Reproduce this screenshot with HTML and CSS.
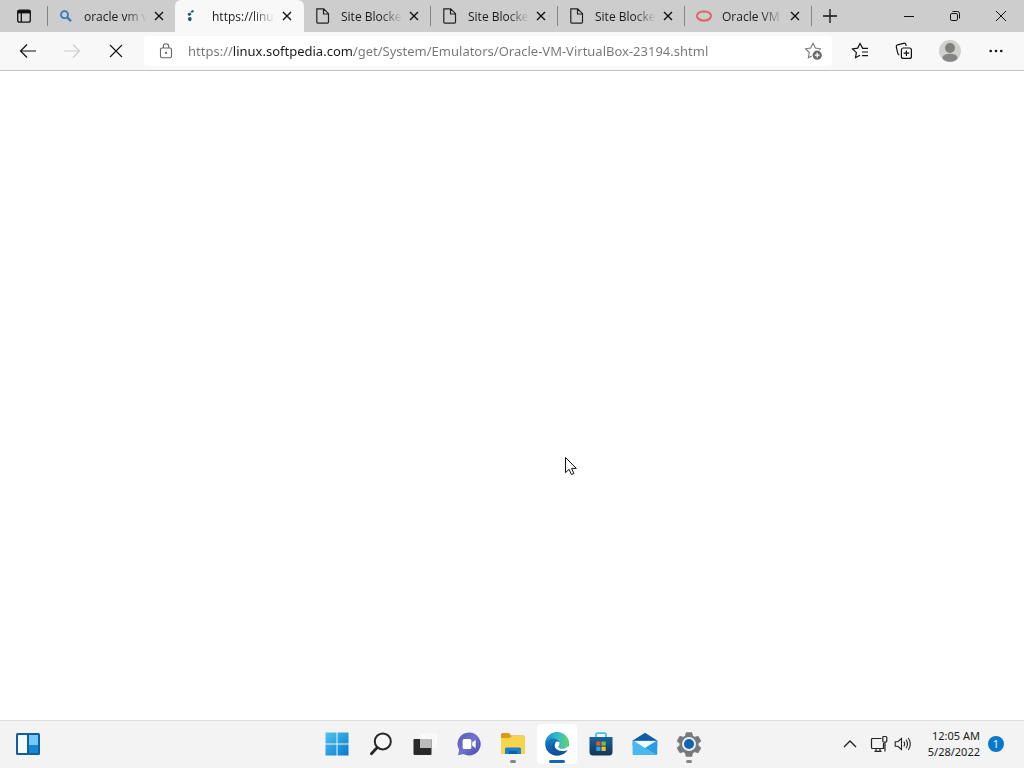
FILE: index.html
```html
<!DOCTYPE html>
<html lang="en">
<head>
<meta charset="utf-8">
<meta name="viewport" content="width=device-width, initial-scale=1">
<title>https://linux.softpedia.com</title>
<link rel="stylesheet" href="styles.css">
</head>
<body>
<div class="desktop">
  <header class="tabstrip">
    <button class="tab-actions" aria-label="Tab actions menu">
      <svg width="16" height="16" viewBox="0 0 16 16" fill="none" stroke="#111" stroke-width="1.3"><rect x="1.7" y="2.2" width="12.6" height="12" rx="2"/><path d="M1.5 3.8h13" stroke-width="3.2"/><path d="M5.3 5v9"/></svg>
    </button>
    <div class="tabs">
      <div class="tab">
        <svg class="favicon" viewBox="0 0 16 16" fill="none" stroke="#3579b8"><circle cx="6.500" cy="6.700" r="3.500" stroke-width="1.800"/><path d="M9.200 9.400l3.800 3.800" stroke-width="2.300"/></svg>
        <button class="tab-title">oracle vm v</button>
        <button class="tab-close" aria-label="Close tab"><svg class="cross" viewBox="0 0 10 10"><path d="M1 1l8 8M9 1L1 9"/></svg></button>
      </div>
      <div class="tab active">
        <svg class="favicon" viewBox="0 0 16 16" fill="#24536b"><path d="M4.600 3.300l2.400-1.300 1 1.600-2.200 1.400zM1.800 5.500l2.500-1 1.100 2-2.100 1.600-1.500-1zM2.300 9.600l2.500-.7.9 2-1 2.300-2-.4-.8-1.800z"/></svg>
        <button class="tab-title">https://linux</button>
        <button class="tab-close" aria-label="Close tab"><svg class="cross" viewBox="0 0 10 10"><path d="M1 1l8 8M9 1L1 9"/></svg></button>
      </div>
      <div class="tab">
        <svg class="favicon page" viewBox="0 0 16 16"><path d="M1.800.8h6.900l4.800 4.900v8.400q0 1-1 1H2.800q-1 0-1-1zM8.500 1v5h5"/></svg>
        <button class="tab-title">Site Blocke</button>
        <button class="tab-close" aria-label="Close tab"><svg class="cross" viewBox="0 0 10 10"><path d="M1 1l8 8M9 1L1 9"/></svg></button>
      </div>
      <div class="tab">
        <svg class="favicon page" viewBox="0 0 16 16"><path d="M1.800.8h6.900l4.800 4.900v8.400q0 1-1 1H2.800q-1 0-1-1zM8.500 1v5h5"/></svg>
        <button class="tab-title">Site Blocke</button>
        <button class="tab-close" aria-label="Close tab"><svg class="cross" viewBox="0 0 10 10"><path d="M1 1l8 8M9 1L1 9"/></svg></button>
      </div>
      <div class="tab">
        <svg class="favicon page" viewBox="0 0 16 16"><path d="M1.800.8h6.900l4.800 4.900v8.400q0 1-1 1H2.800q-1 0-1-1zM8.500 1v5h5"/></svg>
        <button class="tab-title">Site Blocke</button>
        <button class="tab-close" aria-label="Close tab"><svg class="cross" viewBox="0 0 10 10"><path d="M1 1l8 8M9 1L1 9"/></svg></button>
      </div>
      <div class="tab">
        <svg class="favicon" viewBox="0 0 16 16" fill="none" stroke="#dd6560" stroke-width="2"><rect x="1" y="3.400" width="14" height="9" rx="6" ry="4.500"/></svg>
        <button class="tab-title">Oracle VM</button>
        <button class="tab-close" aria-label="Close tab"><svg class="cross" viewBox="0 0 10 10"><path d="M1 1l8 8M9 1L1 9"/></svg></button>
      </div>
    </div>
    <button class="new-tab" aria-label="New tab"><svg width="14" height="14" viewBox="0 0 14 14" stroke="#111" stroke-width="1.3"><path d="M7 0v14M0 7h14"/></svg></button>
    <div class="window-controls">
      <button aria-label="Minimize"><svg width="12" height="12" viewBox="0 0 12 12" stroke="#111"><path d="M1 6.500h10"/></svg></button>
      <button aria-label="Restore"><svg width="12" height="12" viewBox="0 0 12 12" fill="none" stroke="#111"><rect x="1.500" y="3.500" width="7" height="7" rx="1.400"/><path d="M3.500 1.500H8.500q2 0 2 2V8.500"/></svg></button>
      <button aria-label="Close"><svg width="12" height="12" viewBox="0 0 12 12" stroke="#111"><path d="M1 1l10 10M11 1L1 11"/></svg></button>
    </div>
  </header>

  <nav class="toolbar">
    <div class="nav-buttons">
      <button aria-label="Back"><svg width="18" height="16" viewBox="0 0 18 16" fill="none" stroke="#111" stroke-width="1.200"><path d="M17 8H1.600M8 1.500L1.500 8 8 14.500"/></svg></button>
      <button aria-label="Forward" disabled><svg width="18" height="16" viewBox="0 0 18 16" fill="none" stroke="#ccc" stroke-width="1.200"><path d="M1 8h15.400M10 1.500L16.500 8 10 14.500"/></svg></button>
      <button aria-label="Stop"><svg width="14" height="14" viewBox="0 0 14 14" stroke="#111" stroke-width="1.100"><path d="M1 1l12 12M13 1L1 13"/></svg></button>
    </div>
    <div class="address">
      <button class="site-info" aria-label="View site information"><svg width="14" height="16" viewBox="0 0 14 16" fill="none" stroke="#666" stroke-width="1.100"><rect x="1.500" y="5" width="11" height="9.800" rx="1.500"/><path d="M4.300 5V3.400a2.700 2.700 0 0 1 5.400 0V5"/><circle cx="7" cy="9.800" r=".6" fill="#555"/></svg></button>
      <input class="url" type="text" aria-label="Address" spellcheck="false" value="https://linux.softpedia.com/get/System/Emulators/Oracle-VM-VirtualBox-23194.shtml">
      <button class="add-favorite" aria-label="Add this page to favorites"><svg width="18" height="18" viewBox="0 0 18 18" fill="none" stroke="#777" stroke-width="1.100"><path d="M15.500 8l.9-1.200-5-.7L9 1.300 6.700 6.100l-5.100.7 3.700 3.700-.9 5.200 3.400-1.800"/><circle cx="13.200" cy="13.200" r="4.600" fill="#6c6c6c" stroke="none"/><path d="M13.200 10.800v4.800M10.800 13.200h4.800" stroke="#fff" stroke-width="1.300"/></svg></button>
    </div>
    <div class="tools">
      <button aria-label="Favorites"><svg width="18" height="18" viewBox="0 0 18 18" fill="none" stroke="#111" stroke-width="1.200"><path d="M17 6.300h-5.300L9 1.500 6.700 6.100l-5.200.8 3.900 3.700-.9 5.100L9 13.200M11 10h6M11 13.600h6"/></svg></button>
      <button aria-label="Collections"><svg width="18" height="18" viewBox="0 0 18 18" fill="none" stroke="#111" stroke-width="1.200"><rect x="6.400" y="6" width="10" height="10.400" rx="2"/><path d="M11.400 8.400v5.600M8.600 11.200h5.600M4.300 12.800q-1.200-.3-1.500-1.500L1.300 5Q1 3.300 2.600 2.800l6-1.500q1.900-.4 2.400 1.500l.2 1"/></svg></button>
      <button class="profile" aria-label="Profile"><svg width="22" height="22" viewBox="0 0 22 22"><circle cx="11" cy="11" r="11" fill="#d0d0ce"/><circle cx="11" cy="8" r="5" fill="#7f7f7f"/><ellipse cx="11" cy="17.700" rx="7.500" ry="4" fill="#858585"/></svg></button>
      <button aria-label="Settings and more"><svg width="14" height="4" viewBox="0 0 14 4" fill="#111"><circle cx="1.700" cy="2" r="1.300"/><circle cx="7" cy="2" r="1.300"/><circle cx="12.300" cy="2" r="1.300"/></svg></button>
    </div>
  </nav>

  <main class="page-view"></main>

  <footer class="taskbar">
    <button class="widgets" aria-label="Widgets"><svg width="24" height="22" viewBox="0 0 24 22"><rect width="24" height="22" rx="1.500" fill="#125e9c"/><rect x="2" y="2" width="9" height="18" rx=".5" fill="#f4f9fd"/><rect x="13" y="2" width="9" height="10" fill="#72c9f8"/><rect x="13" y="12" width="9" height="8" fill="#1686d3"/></svg></button>
    <div class="apps">
      <button aria-label="Start"><svg width="24" height="24" viewBox="0 0 24 24"><defs><linearGradient id="win" gradientUnits="userSpaceOnUse" x1="0" y1="0" x2="24" y2="24"><stop stop-color="#4fc6f0"/><stop offset="1" stop-color="#0877cc"/></linearGradient></defs><path fill="url(#win)" d="M.5.5h11v11H.5zM12.500.5h11v11h-11zM.5 12.500h11v11H.5zM12.500 12.500h11v11h-11z"/></svg></button>
      <button aria-label="Search"><svg width="24" height="24" viewBox="0 0 24 24" fill="none" stroke="#272727" stroke-linecap="round"><circle cx="13.800" cy="9.400" r="8" stroke-width="2" fill="#f6f6f6"/><path d="M8 15.800l-5.600 6" stroke-width="2.800"/></svg></button>
      <button aria-label="Task view"><svg width="24" height="24" viewBox="0 0 24 24"><rect x="7" y="1" width="17" height="15" rx="1" fill="#f9f9f9"/><rect x=".5" y="7" width="18" height="16" rx="1" fill="#292929"/><path d="M7 7h11.500v9H7z" fill="#bcbcbc"/></svg></button>
      <button aria-label="Chat"><svg width="24" height="24" viewBox="0 0 24 24"><defs><linearGradient id="chat" x2="1" y2="1"><stop stop-color="#5559b8"/><stop offset=".5" stop-color="#7472ce"/><stop offset="1" stop-color="#4646a8"/></linearGradient></defs><path fill="url(#chat)" d="M12 .5A11.500 11.500 0 1 1 6.500 22L1 23.300l1.200-5.400A11.500 11.500 0 0 1 12 .5z"/><rect x="5.700" y="7" width="8.600" height="10" rx="1.500" fill="#fff"/><path d="M15.200 10.500l3.400-2.700v8.400l-3.400-2.700z" fill="#fff"/></svg></button>
      <button class="running" aria-label="File Explorer"><svg width="24" height="24" viewBox="0 0 24 24"><path d="M0 2.500Q0 1 1.500 1H8l2 2.500h12q2 0 2 2V12H0z" fill="#d89b20"/><path d="M0 6h8.500L11 4h12q1 0 1 1v17H0z" fill="#f8d44c"/><path d="M4 22v-5q0-1.500 1.500-1.500h13q1.500 0 1.500 1.500v5z" fill="#1980ca"/><path d="M8 19h8v3H8z" fill="#0c5fa5"/></svg></button>
      <button class="running current" aria-label="Microsoft Edge"><svg width="24" height="24" viewBox="0 0 24 24"><defs><linearGradient id="edgetop" x1="0" x2="1"><stop stop-color="#168fd5"/><stop offset=".55" stop-color="#35bdc9"/><stop offset="1" stop-color="#61d864"/></linearGradient><linearGradient id="edgelow" x2="0" y2="1"><stop stop-color="#1a91d8"/><stop offset="1" stop-color="#0b4d98"/></linearGradient></defs><circle cx="12" cy="12" r="11.800" fill="url(#edgelow)"/><path fill="url(#edgetop)" d="M.3 10.500C1.500 4 6.500.2 12 .2c7 0 11.800 5 11.800 10.300 0 4.300-3 6.300-6.300 6.300-3 0-4.200-1-4.200-2.200 0-.8 1.300-1.200 1.300-3.200 0-2.500-2.800-4.800-6.300-4.800C4.500 6.600 1.500 8.400.3 10.500z"/><path fill="#11549f" d="M9.300 10.200c-4 2.500-2 11 5 12.600 3.500-.2 6.500-2.100 8.300-4.900-5.500 2.300-10.500 1-12.500-2.300-.9-1.800-1-3.800-.8-5.400z"/><path fill="#fff" d="M14.600 11.400c0 2-1.300 2.400-1.300 3.200 0 1.200 1.200 2.200 4.200 2.200 2.300 0 4.600-1 5.700-3l.8 1.800-1.400 2.300c-5.500 2.300-10.500 1-12.500-2.300-1-2.500 0-4.800 1.600-6 1.300-.4 2.900.3 2.900 1.800z"/></svg></button>
      <button aria-label="Microsoft Store"><svg width="24" height="24" viewBox="0 0 24 24"><defs><linearGradient id="store" x2="0" y2="1"><stop stop-color="#17649f"/><stop offset="1" stop-color="#173555"/></linearGradient></defs><path d="M7 6V2.500Q7 1.200 8.300 1.200h7.400Q17 1.200 17 2.500V6" fill="none" stroke="#45c4e6" stroke-width="1.800"/><path fill="url(#store)" d="M.5 5h23v15q0 3.500-3.500 3.500H4Q.5 23.500.5 20z"/><path fill="#f05228" d="M7.300 9.500h4.200v4.200H7.300z"/><path fill="#80bb35" d="M12.500 9.500h4.200v4.200h-4.200z"/><path fill="#28a9ea" d="M7.300 14.700h4.200v4.200H7.300z"/><path fill="#fbc32a" d="M12.500 14.700h4.200v4.200h-4.200z"/></svg></button>
      <button aria-label="Mail"><svg width="26" height="24" viewBox="0 0 26 24"><path fill="#105ca5" d="M.8 8.500L13 .8l12.200 7.700V14H.8z"/><path fill="#2c9be0" d="M.8 8.500h24.400V22q0 1-1 1H1.800q-1 0-1-1z"/><path fill="#48b9ef" d="M.8 8.500L25 22.700q-.3.3-.8.3H1.800q-1 0-1-1z"/><path fill="#f5fafd" d="M2 9h22l-11 7z"/></svg></button>
      <button class="running" aria-label="Settings"><svg width="26" height="26" viewBox="0 0 26 26"><path fill="#78797c" stroke="#78797c" stroke-width="1.500" stroke-linejoin="round" d="M10.500 2h5l.8 3.300 2.200 1.300 3.300-1 2.500 4.300-2.500 2.400v2.400l2.500 2.400-2.500 4.300-3.300-1-2.200 1.300-.8 3.300h-5l-.8-3.300-2.200-1.300-3.300 1-2.500-4.300 2.500-2.400v-2.400L1.700 9.900l2.500-4.300 3.300 1 2.200-1.300z"/><circle cx="13" cy="13" r="7" fill="#e8eef4"/><circle cx="13" cy="13" r="5" fill="#1264ad"/></svg></button>
    </div>
    <div class="tray">
      <button aria-label="Show hidden icons"><svg width="14" height="8" viewBox="0 0 14 8" fill="none" stroke="#222" stroke-width="1.400"><path d="M1 7l6-6 6 6"/></svg></button>
      <button class="quick" aria-label="Network and volume">
        <svg width="18" height="18" viewBox="0 0 18 18" fill="none" stroke="#222" stroke-width="1.200"><path d="M11.500 3.500h-9q-1 0-1 1v8q0 1 1 1h11V8M4.500 16.300h7M6 13.500v2.800M10 13.500v2.800M15 7v9.500"/><rect x="12.800" y="1.500" width="4" height="5.500" rx="1"/></svg>
        <svg width="18" height="16" viewBox="0 0 18 16" fill="none" stroke="#222" stroke-width="1.100"><path d="M1.200 5.700h2.600L7.500 2.500v11L3.800 10.300H1.200zM9.800 5.700q1.700 2.300 0 4.600M12 3.800q3 4.200 0 8.400M14.300 2q4 6 0 12"/></svg>
      </button>
      <button class="clock"><span>12:05 AM</span><span>5/28/2022</span></button>
      <button class="badge" aria-label="1 new notification">1</button>
    </div>
  </footer>

  <svg class="cursor" width="14" height="20" viewBox="0 0 14 20" aria-hidden="true"><path fill="#fff" stroke="#111" d="M1.500 1.500v15.200l3.600-3.400 2.300 5.200 2.500-1-2.300-5.100h4.700z"/></svg>
</div>
</body>
</html>
```
FILE: styles.css
```css
* {
  box-sizing: border-box;
}

body {
  margin: 0;
  font-family: "Open Sans", "Noto Sans", sans-serif;
  font-size: 12px;
  color: #1a1a1a;
}

button {
  display: flex;
  align-items: center;
  justify-content: center;
  margin: 0;
  padding: 0;
  border: 0;
  background: none;
  font: inherit;
  color: inherit;
}

svg {
  display: block;
  flex: none;
}

.desktop {
  position: relative;
  display: flex;
  flex-direction: column;
  min-height: 100vh;
  background: #fff;
}

.tabstrip {
  display: flex;
  height: 32px;
  background: #cdcdcd;
}

.tab-actions {
  flex: none;
  width: 48px;
  background: linear-gradient(#858585, #858585) right 6px / 1px 20px no-repeat;
}

.tabs {
  display: flex;
  flex: 0 1 764px;
  min-width: 0;
}

.tab {
  display: flex;
  align-items: center;
  flex: 0 1 127px;
  min-width: 0;
  padding: 0 9px 0 11px;
  background: linear-gradient(#858585, #858585) right 6px / 1px 20px no-repeat;
}

.tab:first-child {
  padding-left: 10px;
  padding-right: 8px;
  background: none;
}

.tab.active {
  flex-basis: 129px;
  background: #f8f8f8;
  border-radius: 6px 6px 0 0;
}

.favicon {
  width: 16px;
  height: 16px;
  margin-right: 10px;
}

.page {
  fill: none;
  stroke: #222;
  stroke-width: 1.2;
}

.tab-title {
  flex: 1;
  min-width: 0;
  height: 32px;
  justify-content: flex-start;
  white-space: nowrap;
  -webkit-mask-image: linear-gradient(to right, #000 65%, transparent);
  mask-image: linear-gradient(to right, #000 65%, transparent);
}

.tab-close {
  flex: none;
  width: 16px;
  height: 16px;
  margin-left: 4px;
}

.cross {
  width: 10px;
  height: 10px;
  stroke: #111;
  stroke-width: 1.4;
}

.new-tab {
  flex: none;
  width: 36px;
}

.window-controls {
  display: flex;
  margin-left: auto;
}

.window-controls button {
  width: 46px;
}

.toolbar {
  display: flex;
  align-items: center;
  height: 39px;
  padding: 0 6px;
  background: #f8f8f8;
  border-bottom: 1px solid #c4c4c4;
}

.nav-buttons,
.tools {
  display: flex;
  flex: none;
}

.nav-buttons button,
.tools button {
  width: 44px;
  height: 32px;
}

.tools .profile {
  width: 48px;
}

.address {
  display: flex;
  flex: 1;
  align-items: center;
  height: 30px;
  margin: 0 6px;
  background: #fff;
  border-radius: 4px;
}

.site-info {
  flex: none;
  width: 44px;
  height: 30px;
}

.url {
  flex: 1;
  min-width: 0;
  height: 30px;
  padding: 0;
  border: 0;
  outline: 0;
  font-family: "Noto Sans", "Open Sans", sans-serif;
  font-size: 13px;
  color: transparent;
  background: linear-gradient(to right, #767676 45px, #1a1a1a 45px, #1a1a1a 166px, #767676 166px);
  -webkit-background-clip: text;
  background-clip: text;
}

.add-favorite {
  flex: none;
  width: 38px;
  height: 30px;
}

.page-view {
  flex: 1;
}

.taskbar {
  display: grid;
  grid-template-columns: 1fr auto 1fr;
  align-items: center;
  height: 48px;
  padding: 0 6px 0 8px;
  background: #f3f3f3;
  box-shadow: inset 0 1px #dedede;
}

.widgets {
  width: 40px;
  height: 40px;
}

.apps {
  display: flex;
  gap: 4px;
}

.apps button {
  position: relative;
  width: 40px;
  height: 40px;
  border-radius: 4px;
}

.apps .current {
  background: #fff;
}

.running::after {
  content: "";
  position: absolute;
  bottom: 1px;
  left: 50%;
  width: 6px;
  height: 3px;
  border-radius: 2px;
  background: #868686;
  transform: translateX(-50%);
}

.current::after {
  width: 16px;
  background: #0f68b5;
}

.tray {
  display: flex;
  align-items: center;
  justify-content: flex-end;
}

.tray > button:first-child {
  width: 32px;
  height: 40px;
}

.quick {
  gap: 6px;
  height: 40px;
  padding: 0 4px;
}

.clock {
  flex-direction: column;
  align-items: flex-end;
  margin: 0 8px 0 12px;
  font-family: "Noto Sans", "Open Sans", sans-serif;
  font-size: 11px;
  line-height: 16px;
}

.badge {
  width: 16px;
  height: 16px;
  margin-right: 14px;
  border-radius: 50%;
  background: #0878ca;
  color: #fff;
  font-size: 11px;
  line-height: 16px;
}

.cursor {
  position: absolute;
  left: 564px;
  top: 456px;
}
```
